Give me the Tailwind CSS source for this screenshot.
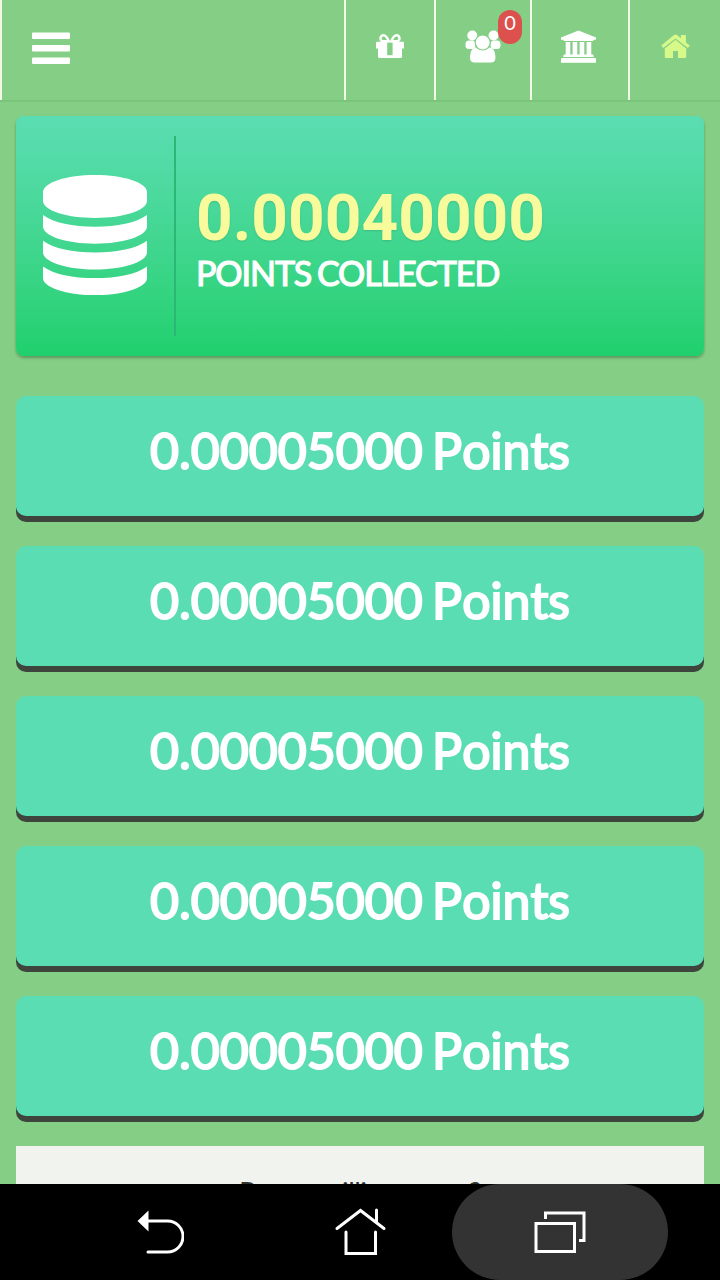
<!DOCTYPE html>
<html lang="en">
<head>
<meta charset="utf-8">
<title>Points</title>
<script src="https://cdn.jsdelivr.net/npm/@tailwindcss/browser@4"></script>
</head>
<body class="bg-[#84cf85] w-[720px] h-[1280px] overflow-hidden flex flex-col font-['Lato',sans-serif] text-white">
<header class="h-[102px] shrink-0 border-b-2 border-[#7bc47c] flex">
  <div class="w-[344px] border-l-2 border-[#f3f8e6] h-[100px] pl-[30px] pt-8">
    <svg class="w-[38px] h-8" viewBox="0 0 38 32" fill="#fff"><rect y="0.5" width="38" height="6.5" rx="1"/><rect y="13" width="38" height="6.5" rx="1"/><rect y="25.5" width="38" height="6.5" rx="1"/></svg>
  </div>
  <div class="w-[90px] border-l-2 border-[#f3f8e6] h-[100px] pl-[30px] pt-[33px]">
    <svg class="w-7 h-[26px]" viewBox="0 0 28 26"><path fill="#fff" d="M1 8.700h26q1 0 1 1v5.800h-2V23.500q0 1.500-1.500 1.500h-21Q2 25 2 23.500v-8H0V9.700q0-1 1-1z"/><path fill="#84cf85" d="M11.200 9.200h5.400v13h-5.400z"/><g fill="none" stroke="#fff" stroke-width="2.400"><path d="M12.800 8.300C11 4 9.500 2.200 7.500 2.200a3 3 0 0 0 0 6.100zM15.200 8.300C17 4 18.500 2.200 20.500 2.200a3 3 0 0 1 0 6.100z"/></g></svg>
  </div>
  <div class="relative w-24 border-l-2 border-[#f3f8e6] h-[100px] pl-[29px] pt-[29px]">
    <svg class="w-9 h-[34px]" viewBox="0 0 36 34" fill="#fff"><circle cx="7.300" cy="6.500" r="5"/><circle cx="28.500" cy="6.500" r="5"/><rect x="0.500" y="11.500" width="10" height="8.500" rx="3.500"/><rect x="25.500" y="11.500" width="10" height="8.500" rx="3.500"/><path d="M11 18.500q6.700 5 13.400 0 5.600.5 6 8.500v2.500q-.4 4-4.400 4H9.500q-4-.2-4.500-4V27q.5-8 6-8.500z"/><circle cx="17.700" cy="13.500" r="7.500" stroke="#84cf85" stroke-width="1.200"/></svg>
    <span class="absolute left-[62px] top-[10px] w-6 h-[34px] rounded-full bg-[#dc514e] text-center text-[20px] leading-[25px]">0</span>
  </div>
  <div class="w-[98px] border-l-2 border-[#f3f8e6] h-[100px] pl-[29px] pt-[30px]">
    <svg class="w-[35px] h-[33px]" viewBox="0 0 35 33" fill="#fff"><path d="M17.500.5 35 7.500v2.200h-2.300q0 1.300-1.300 1.300H3.600q-1.300 0-1.300-1.300H0V7.500zM4.700 12h4.600v12.500h2.300V12h4.700v12.500h2.300V12h4.700v12.500h2.300V12h4.700v12.500h1q1.300 0 1.300 1.200v1.200H2.400v-1.200q0-1.200 1.300-1.200h1zM1.300 28h32.400q1.300 0 1.300 1.300v3.500H0v-3.500Q0 28 1.300 28z"/></svg>
  </div>
  <div class="w-[92px] border-l-2 border-[#f3f8e6] h-[100px] pl-[31px] pt-[33px]">
    <svg class="w-[29px] h-[26px]" viewBox="0 0 29 26" fill="#d6f98a"><path d="M14.500 6.800 25.200 15.600V24q0 1-1 1H17v-7h-5v7H4.800q-1 0-1-1v-8.400z"/><path d="m.3 12.600 12.400-10.300q1.800-1.400 3.600 0l3.600 3V2h5v7.400l3.900 3.200-1.900 2.400L14.500 5.500 2.200 15z"/></svg>
  </div>
</header>
<main class="flex-1 min-h-0 overflow-hidden px-4 pt-[14px]">
  <section class="h-60 rounded-[8px] bg-linear-to-b from-[#5bddb3] to-[#1fd06d] shadow-[0_2px_3px_rgba(0,0,0,0.28)] flex py-5">
    <div class="w-[160px] border-r-2 border-[#2cb777] pl-[27px] pt-[39px]">
      <svg class="w-[104px] h-[120px]" viewBox="0 0 104 120" fill="#fff"><path d="M0 17.200C0 7.500 23.500 0 52 0s52 7.500 52 17.200v8.600C104 35.500 80.500 43 52 43S0 35.500 0 25.800z"/><path id="d" d="M0 40c11 8 29.500 11.700 52 11.700S93 48 104 40v11.600c0 9.500-23.500 17.200-52 17.200S0 61.100 0 51.600z"/><use href="#d" y="25.700"/><use href="#d" y="51.400"/></svg>
    </div>
    <div class="pl-[20px] pt-[43px]">
      <div class="font-['Roboto',sans-serif] font-bold text-[64px] leading-[80px] text-[#f8fb9b] [text-shadow:0_1px_2px_rgba(0,0,0,0.12)]">0.00040000</div>
      <div class="text-[34px] leading-[28px] tracking-[-1.05px] [word-spacing:-2px] whitespace-nowrap [-webkit-text-stroke:1.2px_#fff]">POINTS COLLECTED</div>
    </div>
  </section>
  <div class="mt-10 flex flex-col gap-[30px] text-[50px] leading-[108px] [word-spacing:-3.5px] [font-kerning:none] text-center [-webkit-text-stroke:2px_#fff]">
    <div class="h-[120px] rounded-[10px] bg-[#5bddb3] shadow-[0_6px_0_#3e453d]">0.00005000 Points</div>
    <div class="h-[120px] rounded-[10px] bg-[#5bddb3] shadow-[0_6px_0_#3e453d]">0.00005000 Points</div>
    <div class="h-[120px] rounded-[10px] bg-[#5bddb3] shadow-[0_6px_0_#3e453d]">0.00005000 Points</div>
    <div class="h-[120px] rounded-[10px] bg-[#5bddb3] shadow-[0_6px_0_#3e453d]">0.00005000 Points</div>
    <div class="h-[120px] rounded-[10px] bg-[#5bddb3] shadow-[0_6px_0_#3e453d]">0.00005000 Points</div>
  </div>
  <div class="mt-[30px] h-[100px] bg-[#f0f3ee] pt-[28px] text-center text-[28px] leading-9 tracking-[-0.5px] text-[#333]">Power willing cause?</div>
</main>
<nav class="h-24 shrink-0 bg-black flex">
  <div class="w-[236px] pl-[136px] pt-[24px]">
    <svg class="w-12 h-12" viewBox="0 0 48 48"><path fill="#fff" d="M1.500 13 12.500 2.500v21z"/><path d="M12 13h19.500a15.500 15.500 0 0 1 0 31H12" fill="none" stroke="#fff" stroke-width="3" stroke-linecap="round"/></svg>
  </div>
  <div class="w-[216px] pl-[98px] pt-[24px]">
    <svg class="w-[54px] h-12" viewBox="0 0 54 48" fill="none" stroke="#fff" stroke-width="3" stroke-linecap="round"><path d="M3 20.500 26.500 2.500 50 20.500M42.500 2v12M12 24v21.500h29.500V24"/></svg>
  </div>
  <div class="w-[216px] rounded-full bg-[#333] pl-[82px] pt-[26px]">
    <svg class="w-[54px] h-[45px]" viewBox="0 0 54 45" fill="none" stroke="#fff" stroke-width="3"><path d="M2 13.500h38.500v28H2zM11.500 9V3h38.500v27.500h-5"/></svg>
  </div>
</nav>
</body>
</html>
